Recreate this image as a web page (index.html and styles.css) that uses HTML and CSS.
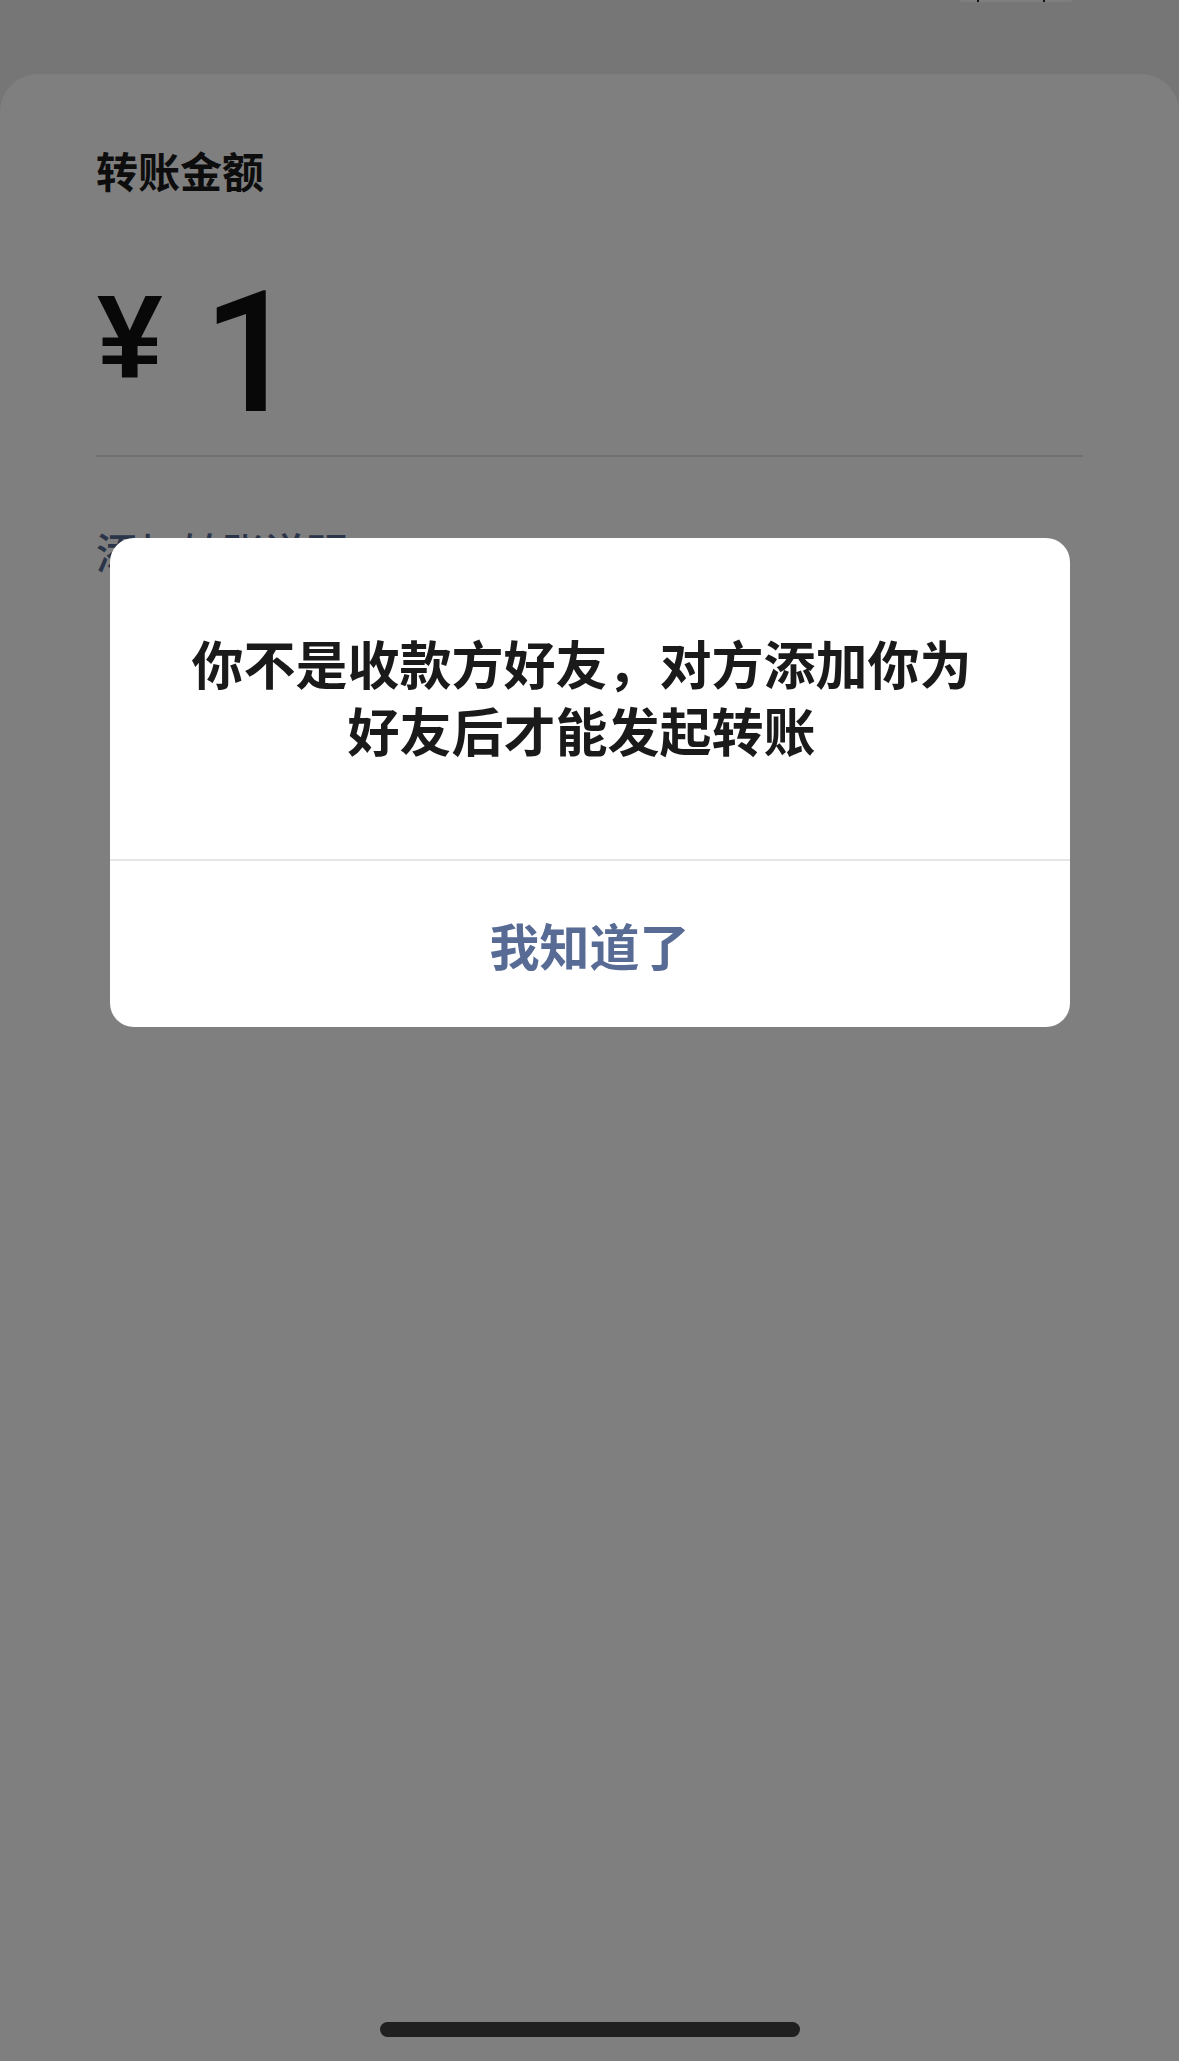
FILE: index.html
```html
<!DOCTYPE html>
<html lang="zh-CN">
<head>
<meta charset="utf-8">
<title>转账</title>
<link rel="stylesheet" href="styles.css">
</head>
<body>
<div class="screen">
  <div class="status">
    <div class="notch-tab"><span></span><span></span></div>
  </div>
  <main class="sheet">
    <div class="label">转账金额</div>
    <div class="amount">
      <span class="yen">¥</span>
      <span class="num">1</span>
    </div>
    <div class="divider"></div>
    <div class="note-link">添加转账说明</div>
  </main>
</div>

<div class="overlay">
  <div class="dialog">
    <div class="msg">你不是收款方好友，对方添加你为好友后才能发起转账</div>
    <div class="btn">我知道了</div>
  </div>
</div>

<div class="home-indicator"></div>
</body>
</html>
```

FILE: styles.css
```css
html, body {
  margin: 0;
  padding: 0;
}

body {
  width: 1179px;
  height: 2061px;
  overflow: hidden;
  background: #ededed;
  font-family: "Noto Sans CJK SC", "Liberation Sans", sans-serif;
  color: #1a1a1a;
}

.screen {
  display: flex;
  flex-direction: column;
  height: 2061px;
}

.status {
  height: 74px;
  position: relative;
  flex: none;
}

.notch-tab {
  position: absolute;
  top: -8px;
  left: 957px;
  width: 118px;
  height: 10px;
  background: #fff;
  border-radius: 0 0 6px 6px;
  display: flex;
  justify-content: space-between;
  padding: 0 30px 0 20px;
  box-sizing: border-box;
}

.notch-tab span {
  width: 2px;
  height: 10px;
  background: #222;
}

.sheet {
  flex: 1;
  background: #ffffff;
  border-radius: 38px 38px 0 0;
  padding: 71px 96px 0;
}

.label {
  font-size: 42px;
  line-height: 50px;
  font-weight: 700;
  color: #1a1a1a;
}

.amount {
  display: flex;
  align-items: flex-start;
  margin-top: 75px;
  height: 168px;
  color: #111;
}

.yen {
  font-family: "Liberation Sans", sans-serif;
  font-weight: 700;
  font-size: 118px;
  line-height: 1;
  margin-top: 8px;
  margin-left: 1px;
}

.num {
  font-family: Roboto, "Liberation Sans", sans-serif;
  font-weight: 500;
  font-size: 168px;
  line-height: 1;
  margin-left: 40px;
}

.divider {
  margin-top: 17px;
  height: 2px;
  background: #e1e1e1;
}

.note-link {
  margin-top: 69px;
  font-size: 42px;
  line-height: 50px;
  font-weight: 500;
  color: #576b95;
}

.overlay {
  position: fixed;
  inset: 0;
  background: rgba(0, 0, 0, 0.5);
  display: flex;
  justify-content: center;
  align-items: flex-start;
  padding-top: 538px;
}

.dialog {
  width: 960px;
  background: #ffffff;
  border-radius: 24px;
  overflow: hidden;
}

.msg {
  padding: 91px 88px 96px 72px;
  font-size: 52px;
  line-height: 67px;
  font-weight: 700;
  text-align: center;
  color: #1a1a1a;
}

.btn {
  border-top: 2px solid #e6e6e6;
  height: 166px;
  display: flex;
  align-items: center;
  justify-content: center;
  font-size: 50px;
  font-weight: 700;
  color: #576b95;
}

.home-indicator {
  position: fixed;
  left: 380px;
  bottom: 24px;
  width: 420px;
  height: 15px;
  border-radius: 8px;
  background: #202020;
}
```
